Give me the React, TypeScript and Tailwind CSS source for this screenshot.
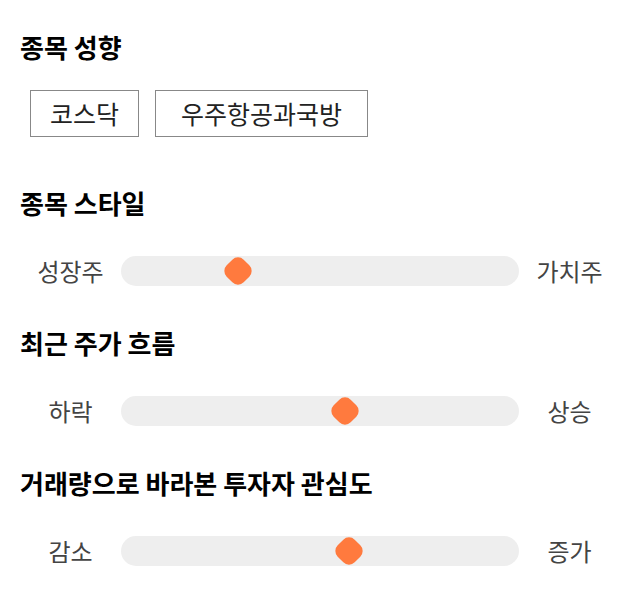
import React from "react";

const font = { fontFamily: '"Noto Sans CJK KR", "Noto Sans", sans-serif' };

function Slider({ left, right, value }: { left: string; right: string; value: number }) {
  return (
    <div className="flex items-center h-[30px] px-5">
      <div className="w-[101px] text-center text-[24px] text-[#444444] leading-[30px]">{left}</div>
      <div className="relative flex-1 h-[30px] rounded-full bg-[#eeeeee]">
        <div
          className="absolute top-1/2 w-[24px] h-[24px] -translate-x-1/2 -translate-y-1/2 rotate-45 rounded-[8px] bg-[#ff7a3e]"
          style={{ left: `${value * 100}%` }}
        />
      </div>
      <div className="w-[101px] text-center text-[24px] text-[#444444] leading-[30px]">{right}</div>
    </div>
  );
}

function Heading({ children }: { children: React.ReactNode }) {
  return <h2 className="px-5 text-[26px] font-bold leading-[30px] text-black">{children}</h2>;
}

export default function App() {
  return (
    <div className="w-[640px] h-[606px] bg-white pt-[32px]" style={font}>
      <Heading>종목 성향</Heading>
      <div className="flex gap-4 px-[30px] mt-[28px]">
        <div className="h-[47px] w-[109px] justify-center flex items-center border border-[#888888] text-[25px] text-[#222222]">코스닥</div>
        <div className="h-[47px] w-[213px] justify-center flex items-center border border-[#888888] text-[25px] text-[#222222]">우주항공과국방</div>
      </div>
      <div className="mt-[51px]">
        <Heading>종목 스타일</Heading>
        <div className="mt-[38px]">
          <Slider left="성장주" right="가치주" value={0.295} />
        </div>
      </div>
      <div className="mt-[42px]">
        <Heading>최근 주가 흐름</Heading>
        <div className="mt-[38px]">
          <Slider left="하락" right="상승" value={0.562} />
        </div>
      </div>
      <div className="mt-[42px]">
        <Heading>거래량으로 바라본 투자자 관심도</Heading>
        <div className="mt-[38px]">
          <Slider left="감소" right="증가" value={0.572} />
        </div>
      </div>
    </div>
  );
}
